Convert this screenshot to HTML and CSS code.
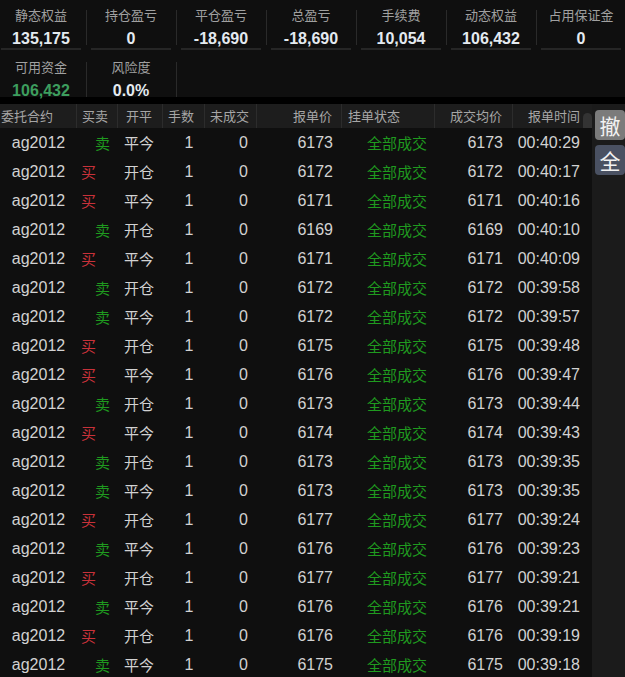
FILE: index.html
```html
<!DOCTYPE html>
<html lang="zh-CN">
<head>
<meta charset="utf-8">
<title>委托</title>
<link rel="stylesheet" href="styles.css">
</head>
<body>
<div class="summary">
  <div class="srow srow1">
    <div class="cell"><div class="box"><div class="label">静态权益</div><div class="value">135,175</div></div><div class="sep"></div></div>
    <div class="cell"><div class="box"><div class="label">持仓盈亏</div><div class="value">0</div></div><div class="sep"></div></div>
    <div class="cell"><div class="box"><div class="label">平仓盈亏</div><div class="value">-18,690</div></div><div class="sep"></div></div>
    <div class="cell"><div class="box"><div class="label">总盈亏</div><div class="value">-18,690</div></div><div class="sep"></div></div>
    <div class="cell"><div class="box"><div class="label">手续费</div><div class="value">10,054</div></div><div class="sep"></div></div>
    <div class="cell"><div class="box"><div class="label">动态权益</div><div class="value">106,432</div></div><div class="sep"></div></div>
    <div class="cell"><div class="box"><div class="label">占用保证金</div><div class="value">0</div></div><div class="sep"></div></div>
  </div>
  <div class="srow srow2">
    <div class="cell"><div class="box"><div class="label">可用资金</div><div class="value green">106,432</div></div><div class="sep"></div></div>
    <div class="cell"><div class="box"><div class="label">风险度</div><div class="value">0.0%</div></div><div class="sep"></div></div>
  </div>
</div>
<div class="band"></div>
<div class="main">
  <div class="table">
    <div class="thead">
      <div class="col w1 h1">委托合约</div>
      <div class="col w2 h2">买卖</div>
      <div class="col w3 h3">开平</div>
      <div class="col w4 h4">手数</div>
      <div class="col w5 h5">未成交</div>
      <div class="col w6 h6">报单价</div>
      <div class="col w7 h7">挂单状态</div>
      <div class="col w8 h8">成交均价</div>
      <div class="col w9 h9">报单时间</div>
      <div class="thumbcol"><div class="thumb"></div></div>
    </div>
    <div class="tbody">
      <div class="row"><div class="col w1 d1">ag2012</div><div class="col w2 d2 sell">卖</div><div class="col w3 d3">平今</div><div class="col w4 d4">1</div><div class="col w5 d5">0</div><div class="col w6 d6">6173</div><div class="col w7 d7">全部成交</div><div class="col w8 d8">6173</div><div class="col w9 d9">00:40:29</div></div>
      <div class="row"><div class="col w1 d1">ag2012</div><div class="col w2 d2 buy">买</div><div class="col w3 d3">开仓</div><div class="col w4 d4">1</div><div class="col w5 d5">0</div><div class="col w6 d6">6172</div><div class="col w7 d7">全部成交</div><div class="col w8 d8">6172</div><div class="col w9 d9">00:40:17</div></div>
      <div class="row"><div class="col w1 d1">ag2012</div><div class="col w2 d2 buy">买</div><div class="col w3 d3">平今</div><div class="col w4 d4">1</div><div class="col w5 d5">0</div><div class="col w6 d6">6171</div><div class="col w7 d7">全部成交</div><div class="col w8 d8">6171</div><div class="col w9 d9">00:40:16</div></div>
      <div class="row"><div class="col w1 d1">ag2012</div><div class="col w2 d2 sell">卖</div><div class="col w3 d3">开仓</div><div class="col w4 d4">1</div><div class="col w5 d5">0</div><div class="col w6 d6">6169</div><div class="col w7 d7">全部成交</div><div class="col w8 d8">6169</div><div class="col w9 d9">00:40:10</div></div>
      <div class="row"><div class="col w1 d1">ag2012</div><div class="col w2 d2 buy">买</div><div class="col w3 d3">平今</div><div class="col w4 d4">1</div><div class="col w5 d5">0</div><div class="col w6 d6">6171</div><div class="col w7 d7">全部成交</div><div class="col w8 d8">6171</div><div class="col w9 d9">00:40:09</div></div>
      <div class="row"><div class="col w1 d1">ag2012</div><div class="col w2 d2 sell">卖</div><div class="col w3 d3">开仓</div><div class="col w4 d4">1</div><div class="col w5 d5">0</div><div class="col w6 d6">6172</div><div class="col w7 d7">全部成交</div><div class="col w8 d8">6172</div><div class="col w9 d9">00:39:58</div></div>
      <div class="row"><div class="col w1 d1">ag2012</div><div class="col w2 d2 sell">卖</div><div class="col w3 d3">平今</div><div class="col w4 d4">1</div><div class="col w5 d5">0</div><div class="col w6 d6">6172</div><div class="col w7 d7">全部成交</div><div class="col w8 d8">6172</div><div class="col w9 d9">00:39:57</div></div>
      <div class="row"><div class="col w1 d1">ag2012</div><div class="col w2 d2 buy">买</div><div class="col w3 d3">开仓</div><div class="col w4 d4">1</div><div class="col w5 d5">0</div><div class="col w6 d6">6175</div><div class="col w7 d7">全部成交</div><div class="col w8 d8">6175</div><div class="col w9 d9">00:39:48</div></div>
      <div class="row"><div class="col w1 d1">ag2012</div><div class="col w2 d2 buy">买</div><div class="col w3 d3">平今</div><div class="col w4 d4">1</div><div class="col w5 d5">0</div><div class="col w6 d6">6176</div><div class="col w7 d7">全部成交</div><div class="col w8 d8">6176</div><div class="col w9 d9">00:39:47</div></div>
      <div class="row"><div class="col w1 d1">ag2012</div><div class="col w2 d2 sell">卖</div><div class="col w3 d3">开仓</div><div class="col w4 d4">1</div><div class="col w5 d5">0</div><div class="col w6 d6">6173</div><div class="col w7 d7">全部成交</div><div class="col w8 d8">6173</div><div class="col w9 d9">00:39:44</div></div>
      <div class="row"><div class="col w1 d1">ag2012</div><div class="col w2 d2 buy">买</div><div class="col w3 d3">平今</div><div class="col w4 d4">1</div><div class="col w5 d5">0</div><div class="col w6 d6">6174</div><div class="col w7 d7">全部成交</div><div class="col w8 d8">6174</div><div class="col w9 d9">00:39:43</div></div>
      <div class="row"><div class="col w1 d1">ag2012</div><div class="col w2 d2 sell">卖</div><div class="col w3 d3">开仓</div><div class="col w4 d4">1</div><div class="col w5 d5">0</div><div class="col w6 d6">6173</div><div class="col w7 d7">全部成交</div><div class="col w8 d8">6173</div><div class="col w9 d9">00:39:35</div></div>
      <div class="row"><div class="col w1 d1">ag2012</div><div class="col w2 d2 sell">卖</div><div class="col w3 d3">平今</div><div class="col w4 d4">1</div><div class="col w5 d5">0</div><div class="col w6 d6">6173</div><div class="col w7 d7">全部成交</div><div class="col w8 d8">6173</div><div class="col w9 d9">00:39:35</div></div>
      <div class="row"><div class="col w1 d1">ag2012</div><div class="col w2 d2 buy">买</div><div class="col w3 d3">开仓</div><div class="col w4 d4">1</div><div class="col w5 d5">0</div><div class="col w6 d6">6177</div><div class="col w7 d7">全部成交</div><div class="col w8 d8">6177</div><div class="col w9 d9">00:39:24</div></div>
      <div class="row"><div class="col w1 d1">ag2012</div><div class="col w2 d2 sell">卖</div><div class="col w3 d3">平今</div><div class="col w4 d4">1</div><div class="col w5 d5">0</div><div class="col w6 d6">6176</div><div class="col w7 d7">全部成交</div><div class="col w8 d8">6176</div><div class="col w9 d9">00:39:23</div></div>
      <div class="row"><div class="col w1 d1">ag2012</div><div class="col w2 d2 buy">买</div><div class="col w3 d3">开仓</div><div class="col w4 d4">1</div><div class="col w5 d5">0</div><div class="col w6 d6">6177</div><div class="col w7 d7">全部成交</div><div class="col w8 d8">6177</div><div class="col w9 d9">00:39:21</div></div>
      <div class="row"><div class="col w1 d1">ag2012</div><div class="col w2 d2 sell">卖</div><div class="col w3 d3">平今</div><div class="col w4 d4">1</div><div class="col w5 d5">0</div><div class="col w6 d6">6176</div><div class="col w7 d7">全部成交</div><div class="col w8 d8">6176</div><div class="col w9 d9">00:39:21</div></div>
      <div class="row"><div class="col w1 d1">ag2012</div><div class="col w2 d2 buy">买</div><div class="col w3 d3">开仓</div><div class="col w4 d4">1</div><div class="col w5 d5">0</div><div class="col w6 d6">6176</div><div class="col w7 d7">全部成交</div><div class="col w8 d8">6176</div><div class="col w9 d9">00:39:19</div></div>
      <div class="row"><div class="col w1 d1">ag2012</div><div class="col w2 d2 sell">卖</div><div class="col w3 d3">平今</div><div class="col w4 d4">1</div><div class="col w5 d5">0</div><div class="col w6 d6">6175</div><div class="col w7 d7">全部成交</div><div class="col w8 d8">6175</div><div class="col w9 d9">00:39:18</div></div>
    </div>
  </div>
  <div class="side">
    <div class="btn btn-cancel">撤</div>
    <div class="btn btn-all">全</div>
  </div>
</div>
</body>
</html>
```
FILE: styles.css
```css
html, body {
  margin: 0;
  padding: 0;
}
body {
  width: 625px;
  height: 677px;
  overflow: hidden;
  background: #0f0f0f;
  font-family: "Liberation Sans", "Noto Sans CJK SC", sans-serif;
}

/* summary */
.summary {
  height: 97px;
}
.srow {
  display: grid;
  grid-template-columns: repeat(7, 90px);
  margin-left: -3px;
}
.srow1 { height: 50px; }
.srow2 { height: 47px; }
.cell {
  display: flex;
}
.box {
  flex: 1;
  margin: 0 5px 0 4px;
  text-align: center;
  white-space: nowrap;
}
.srow1 .box {
  padding-top: 5px;
  height: 43px;
  border-bottom: 2px solid #262626;
}
.srow2 .box {
  padding-top: 7px;
}
.sep {
  width: 1px;
  background: #2a2a2a;
}
.srow1 .sep { margin: 10px 0 5px; }
.srow2 .sep { margin-top: 12px; }
.label {
  font-family: "Noto Sans CJK SC", sans-serif;
  font-size: 13px;
  line-height: 20px;
  color: #a0a0a0;
}
.value {
  font-size: 16px;
  font-weight: bold;
  line-height: 18px;
  margin-top: 5px;
  color: #e4eaf0;
}
.srow2 .value {
  line-height: 13px;
  margin-top: 7px;
}
.value.green { color: #3d9e5e; }

.band {
  height: 7px;
  background: #000;
}

/* table */
.main {
  display: flex;
  height: 573px;
}
.table {
  width: 592px;
  flex: none;
}
.thead {
  display: flex;
  height: 24px;
  background: #1d1d1d;
  font-family: "Noto Sans CJK SC", sans-serif;
  font-size: 13px;
  line-height: 24px;
  color: #a6a6a6;
}
.col {
  flex: none;
  box-sizing: border-box;
  white-space: nowrap;
  overflow: hidden;
}
.thead .col { border-right: 1px solid #2c2c2c; }
.thead .w9 { border-right: none; }
.w1 { width: 77px; }
.w2 { width: 41px; }
.w3 { width: 45px; }
.w4 { width: 42px; }
.w5 { width: 52px; }
.w6 { width: 85px; }
.w7 { width: 93px; }
.w8 { width: 78px; }
.w9 { width: 70px; }

.h1 { padding-left: 1px; }
.h2 { padding-left: 5px; }
.h3 { padding-left: 8px; }
.h4 { padding-left: 5px; }
.h5 { padding-left: 5px; }
.h6 { text-align: right; padding-right: 9px; }
.h7 { padding-left: 6px; }
.h8 { text-align: right; padding-right: 10px; }
.h9 { text-align: right; padding-right: 3px; }

.thumbcol {
  width: 9px;
  flex: none;
}
.thumb {
  margin-top: 9px;
  height: 15px;
  border-radius: 5px 5px 0 0;
  background: #333;
}

.row {
  display: flex;
  height: 29px;
  line-height: 29px;
  font-size: 16px;
  color: #d2d2d2;
}
.d1 { text-align: center; }
.d2, .d3, .d7 {
  font-family: "Noto Sans CJK SC", sans-serif;
  font-size: 15px;
}
.d2 { padding-left: 4px; }
.d2.sell { padding-left: 18px; color: #1f9a1f; }
.d2.buy { color: #c8323a; }
.d3 { padding-left: 6px; }
.d4 { text-align: center; padding-left: 10px; }
.d5 { text-align: right; padding-right: 9px; }
.d6 { text-align: right; padding-right: 9px; }
.d7 { padding-left: 25px; color: #1f9a1f; }
.d8 { text-align: right; padding-right: 10px; }
.d9 { text-align: right; padding-right: 3px; }

/* side */
.side {
  flex: 1;
  background: #1b1b1b;
  padding: 6px 0 0 3px;
  display: flex;
  flex-direction: column;
  gap: 5px;
}
.btn {
  width: 30px;
  height: 30px;
  border-radius: 4px;
  font-family: "Noto Sans CJK SC", sans-serif;
  font-size: 21px;
  line-height: 30px;
  text-align: center;
  color: #f2f2f2;
}
.btn-cancel { background: #7b7b7b; }
.btn-all { background: #4a5162; }
```
